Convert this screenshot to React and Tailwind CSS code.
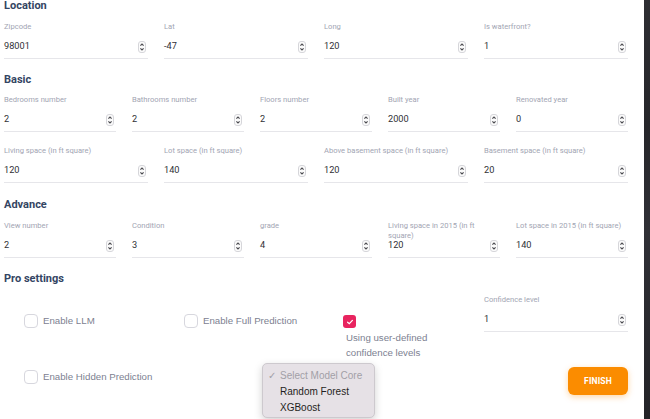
import React from 'react';

const Spinner = () => (
  <svg width="8" height="12" viewBox="0 0 8 12" className="shrink-0 mr-[2px] mt-[2px]">
    <rect x="0.5" y="0.5" width="7" height="11" rx="2.5" fill="#fbfbfb" stroke="#d6d6da" />
    <path d="M2.4 4.7 L4 3.1 L5.6 4.7" fill="none" stroke="#4a4a4f" strokeWidth="1.1" />
    <path d="M2.4 7.3 L4 8.9 L5.6 7.3" fill="none" stroke="#4a4a4f" strokeWidth="1.1" />
  </svg>
);

const Field = ({ label, value }) => (
  <div className="flex flex-col min-w-0">
    <div className="h-[12px] pt-[1px] text-[7.6px] leading-[10px] text-[#a2a5b3]">{label}</div>
    <div className="flex items-center h-[26px] border-b border-[#e6e6ea]">
      <span className="flex-1 text-[9.2px] leading-[16px] text-[#2f3036]">{value}</span>
      <Spinner />
    </div>
  </div>
);

const Heading = ({ children, className }) => (
  <h2 className={`h-[14px] text-[11px] leading-[14px] font-bold text-[#344563] ${className}`}>{children}</h2>
);

const Check = ({ label }) => (
  <label className="flex items-center gap-[5px] whitespace-nowrap font-['Liberation_Sans',Arial,sans-serif] text-[9.7px] text-[#7d8191]">
    <span className="shrink-0 w-[14px] h-[14px] rounded-[4px] border border-[#d7d7de] bg-white"></span>
    {label}
  </label>
);

const App = () => {
  const location = [
    ['Zipcode', '98001'],
    ['Lat', '-47'],
    ['Long', '120'],
    ['Is waterfront?', '1']
  ];
  const basic = [
    ['Bedrooms number', '2'],
    ['Bathrooms number', '2'],
    ['Floors number', '2'],
    ['Built year', '2000'],
    ['Renovated year', '0']
  ];
  const space = [
    ['Living space (in ft square)', '120'],
    ['Lot space (in ft square)', '140'],
    ['Above basement space (in ft square)', '120'],
    ['Basement space (in ft square)', '20']
  ];
  const advance = [
    ['View number', '2'],
    ['Condition', '3'],
    ['grade', '4'],
    ['Living space in 2015 (in ft square)', '120'],
    ['Lot space in 2015 (in ft square)', '140']
  ];

  return (
    <div className="flex w-[650px] h-[419px] overflow-hidden bg-white font-['Roboto',sans-serif]">
      <div className="flex-1 pl-[4px] pr-[16px]">
        <Heading className="mt-[-1px]">Location</Heading>
        <div className="mt-[8px] grid grid-cols-4 gap-x-4">
          {location.map(([l, v]) => <Field key={l} label={l} value={v} />)}
        </div>

        <Heading className="mt-[14px]">Basic</Heading>
        <div className="mt-[7px] grid grid-cols-5 gap-x-4">
          {basic.map(([l, v]) => <Field key={l} label={l} value={v} />)}
        </div>
        <div className="mt-[13px] grid grid-cols-4 gap-x-4">
          {space.map(([l, v]) => <Field key={l} label={l} value={v} />)}
        </div>

        <Heading className="mt-[15px]">Advance</Heading>
        <div className="mt-[8px] grid grid-cols-5 gap-x-4">
          {advance.map(([l, v]) => <Field key={l} label={l} value={v} />)}
        </div>

        <Heading className="mt-[14px]">Pro settings</Heading>
        <div className="mt-[8px] grid grid-cols-4 gap-x-4 gap-y-[7px] items-start">
          <div className="pl-5 pt-[20px]"><Check label="Enable LLM" /></div>
          <div className="pl-5 pt-[20px]"><Check label="Enable Full Prediction" /></div>
          <div className="pl-[22px] pt-[21px] font-['Liberation_Sans',Arial,sans-serif]">
            <span className="ml-[-3px] flex items-center justify-center w-[13px] h-[13px] rounded-[3px] bg-[#e8245f]">
              <svg width="8" height="8" viewBox="0 0 8 8">
                <path d="M1.6 4.2 L3.3 5.7 L6.4 2.4" fill="none" stroke="#fff" strokeWidth="1.2" strokeLinecap="round" />
              </svg>
            </span>
            <p className="mt-[2px] text-[9.7px] leading-[15px] text-[#7d8191]">
              Using user-defined
              <br />
              confidence levels
            </p>
          </div>
          <Field label="Confidence level" value="1" />

          <div className="pl-5 pt-[3px]"><Check label="Enable Hidden Prediction" /></div>
          <div className="relative col-span-2 h-[28px]">
            <div className="absolute left-[98px] top-[-4px] w-[113px] h-[55px] pt-[4px] rounded-[5px] border border-[#cdc9ce] bg-[#e6e1e6] shadow-[0_3px_8px_rgba(0,0,0,0.18)] font-['Liberation_Sans',Arial,sans-serif] text-[10px] leading-[16px]">
              <div className="flex text-[#a29fa6]">
                <span className="w-[17px] pl-[5px]">✓</span>
                <span>Select Model Core</span>
              </div>
              <div className="pl-[17px] text-[#1f1f22]">Random Forest</div>
              <div className="pl-[17px] text-[#1f1f22]">XGBoost</div>
            </div>
          </div>
          <div className="flex justify-end">
            <button className="w-[60px] h-[28px] rounded-[6px] bg-[#fb8c00] text-white text-[8.5px] font-bold tracking-[0.02em] shadow-[0_2px_6px_rgba(251,140,0,0.35)]">
              FINISH
            </button>
          </div>
        </div>
      </div>
      <div className="w-[6px] h-full bg-[linear-gradient(160deg,#2e2e33_0%,#26262a_30%,#303036_55%,#232327_100%)]"></div>
    </div>
  );
};

export default App;
